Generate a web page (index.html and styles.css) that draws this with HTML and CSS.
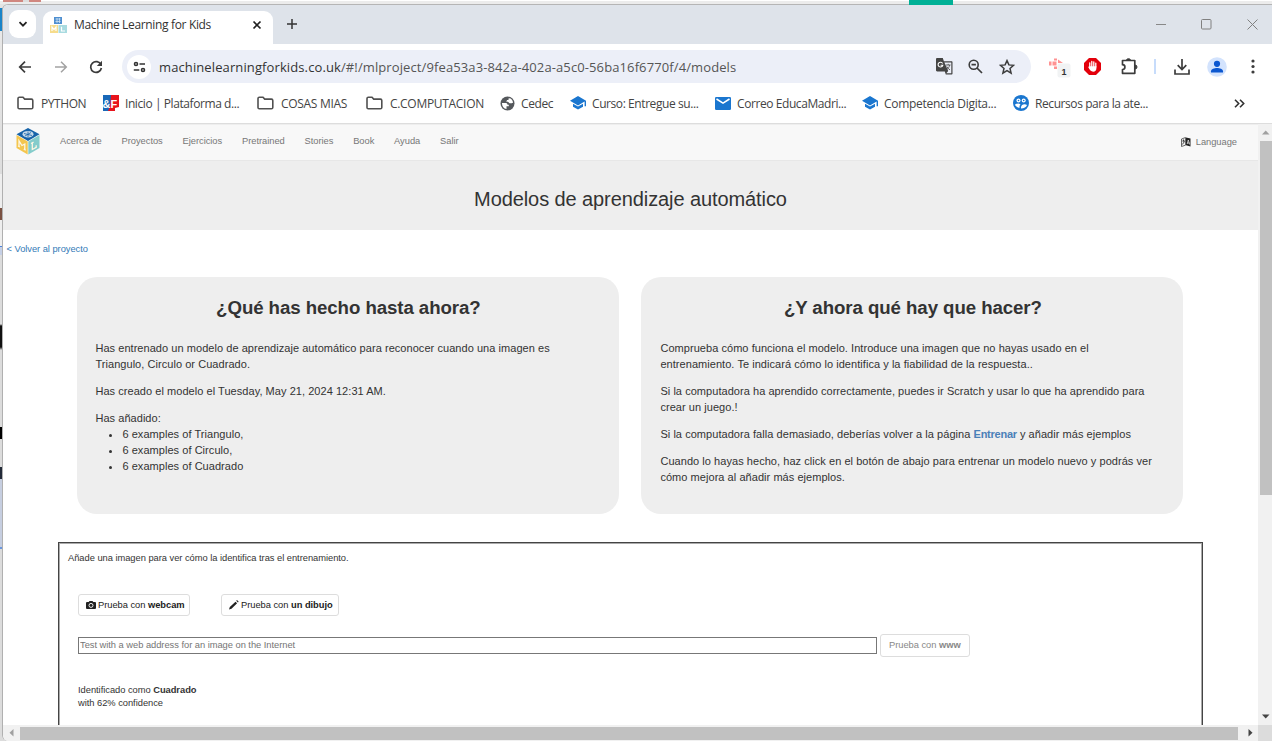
FILE: index.html
```html
<!DOCTYPE html>
<html lang="es">
<head>
<meta charset="utf-8">
<title>Machine Learning for Kids</title>
<link rel="stylesheet" href="styles.css">
</head>
<body>
<div class="desktop-top"><i class="red-bit"></i><i class="teal-bit"></i></div>
<div class="desktop">
<div class="window">
  <header class="tabstrip">
    <button class="tab-search"><svg width="10" height="10" viewBox="0 0 10 10"><path d="M1.500 3.200 5 6.700 8.500 3.200" fill="none" stroke="#222" stroke-width="1.800"/></svg></button>
    <div class="tab">
      <svg class="favicon" width="17" height="16" viewBox="0 0 17 16"><path fill="#4f8fd0" d="M4 0h8v7H4z"/><path d="M5.500 2h5M5.500 4.500h5M7 1v5M9.500 1v5" stroke="#c9dff3" stroke-width=".8"/><path fill="#f6dc8c" d="M0 8h8v8H0z"/><path fill="#a9dbe0" d="M8.500 8H17v8H8.500z"/><path d="M2 14v-4l2 2.500L6 10v4M11.500 9.800V14H15" fill="none" stroke="#fff" stroke-width="1.200"/></svg>
      <span class="tab-title">Machine Learning for Kids</span>
      <svg class="tab-close" width="10" height="10" viewBox="0 0 10 10"><path d="m1.500 1.500 7 7m0-7-7 7" stroke="#222" stroke-width="1.700"/></svg>
    </div>
    <svg class="newtab" width="12" height="12" viewBox="0 0 12 12"><path d="M6 1v10M1 6h10" stroke="#333" stroke-width="1.500"/></svg>
    <div class="wincontrols">
      <svg width="10" height="10" viewBox="0 0 10 10"><path d="M0 5.500h10" stroke="#888"/></svg>
      <svg width="11" height="11" viewBox="0 0 11 11"><rect x=".5" y=".5" width="9.500" height="9.500" rx="1" fill="none" stroke="#808080"/></svg>
      <svg width="11" height="11" viewBox="0 0 11 11"><path d="m.5.5 10 10m0-10-10 10" stroke="#808080"/></svg>
    </div>
  </header>
  <div class="toolbar">
    <div class="navbuttons">
      <svg width="14" height="14" viewBox="0 0 14 14"><path d="M13 7H2m5-5.300L1.700 7 7 12.300" fill="none" stroke="#3c3c3c" stroke-width="1.700"/></svg>
      <svg width="14" height="14" viewBox="0 0 14 14"><path d="M1 7h11M7 1.700 12.300 7 7 12.300" fill="none" stroke="#a3a3a3" stroke-width="1.500"/></svg>
      <svg width="14" height="14" viewBox="0 0 14 14"><path d="M12 4.700A5.400 5.400 0 1 0 12.400 8" fill="none" stroke="#3c3c3c" stroke-width="1.700"/><path d="M13 .8V6H7.800z" fill="#3c3c3c"/></svg>
    </div>
    <div class="omnibox">
      <span class="site-info"><svg width="13" height="12" viewBox="0 0 13 12"><g fill="none" stroke="#333" stroke-width="1.600"><circle cx="3" cy="3" r="1.500"/><path d="M6.500 3H12M.8 9h5.500"/><circle cx="10" cy="9" r="1.500"/></g></svg></span>
      <span class="url"><b>machinelearningforkids.co.uk</b>/#!/mlproject/9fea53a3-842a-402a-a5c0-56ba16f6770f/4/models</span>
      <svg class="ic-translate" width="17" height="17" viewBox="0 0 17 17"><path d="M1.200 0h5.600l1.100 3.200h7.600c.6 0 1 .4 1 1v11.300c0 .6-.4 1-1 1H9.800L8.800 13.500H1.200C.5 13.500 0 13 0 12.300V1.200C0 .5.500 0 1.200 0z" fill="#444"/><path d="M8.400 4.400h6.900v10.900h-5l1.900-2.200z" fill="#eceff8"/><path d="M6.600 5.400A2.400 2.400 0 1 0 6.800 7.300H4.600" fill="none" stroke="#fff" stroke-width="1.100"/><path d="M9.700 7h4.900M12.200 5.800V7m1.400 0c-.3 2-1.300 3.300-2.600 4.400M10.800 8.500c.6 1.400 1.900 2.500 3.200 3.400" fill="none" stroke="#555" stroke-width=".9"/></svg>
      <svg class="ic-zoom" width="15" height="15" viewBox="0 0 15 15"><circle cx="5.700" cy="5.700" r="4.500" fill="none" stroke="#3c3c3c" stroke-width="1.600"/><path d="M3.500 5.700h4.400M9 9l5 5" stroke="#3c3c3c" stroke-width="1.700"/></svg>
      <svg class="ic-star" width="16" height="16" viewBox="0 0 16 16"><path d="m8 1.600 1.900 4.300 4.700.4L11 9.400l1.100 4.700L8 11.600l-4.100 2.500L5 9.400 1.400 6.300l4.700-.4z" fill="none" stroke="#3c3c3c" stroke-width="1.500"/></svg>
    </div>
    <div class="extensions">
      <svg width="24" height="22" viewBox="0 0 24 22"><path d="M0 5.500h2.500v4H0zM3.500 5.500h4v4h-4zM5 2.500h3v2H5zM5 10.500h3v2.500H5zM9 3.500l5 3.500H9z" fill="#ff9292"/><rect x="8.500" y="7.500" width="13" height="14" rx="2" fill="#f1f3f4"/><text x="15" y="18.500" text-anchor="middle" class="badge">1</text></svg>
      <svg width="17" height="17" viewBox="0 0 17 17"><path d="M5 0h7l5 5v7l-5 5H5l-5-5V5z" fill="#e3000b"/><path d="M5.800 9.500V4.800M7.800 8.500V3.500M9.800 8.500V3.800M11.800 9V5.200" stroke="#fff" stroke-width="1.300" stroke-linecap="round"/><path d="M5.200 8.300h7.200v2.200c0 2-1.200 3.200-3.200 3.200-2.200 0-3.500-1.500-5-4.600.3-.8 1-.8 1.500 0z" fill="#fff"/></svg>
      <svg width="17" height="17" viewBox="0 0 17 17"><path d="M1.500 2.500h12.300v12.800H1.500V11.500a2.400 2.400 0 0 0 0-4.800z" fill="none" stroke="#3c3c3c" stroke-width="1.700" stroke-linejoin="round"/><path d="M5.500 2.200a2 1.500 0 0 1 4 0M14 7a2 2 0 0 1 0 4" fill="#3c3c3c" stroke="#3c3c3c"/></svg>
      <span class="divider"></span>
      <svg width="16" height="16" viewBox="0 0 16 16"><path d="M8 0v10M3.700 6.200 8 10.500l4.300-4.300M1 10.500V15h14v-4.500" fill="none" stroke="#3c3c3c" stroke-width="1.700"/></svg>
      <svg width="20" height="20" viewBox="0 0 20 20"><circle cx="10" cy="10" r="9.800" fill="#d3e3fd"/><circle cx="10" cy="6.800" r="3.100" fill="#0b57d0"/><path d="M4 15.500v-1.300C4 12 7.500 11 10 11s6 1 6 3.200v1.300z" fill="#0b57d0"/></svg>
      <svg width="4" height="15" viewBox="0 0 4 15"><g fill="#3c3c3c"><circle cx="2" cy="2" r="1.600"/><circle cx="2" cy="7.500" r="1.600"/><circle cx="2" cy="13" r="1.600"/></g></svg>
    </div>
  </div>
  <nav class="bookmarks">
    <a class="bm"><svg width="17" height="14" viewBox="0 0 17 14"><path class="folder" d="M1 11.500v-9Q1 1.200 2.300 1.200H6l1.700 1.900h6.700q1.400 0 1.400 1.400v7q0 1.300-1.400 1.300H2.300Q1 12.800 1 11.500z"/></svg><span>PYTHON</span></a>
    <a class="bm bm-tight"><svg width="16" height="16" viewBox="0 0 16 16"><path fill="#1868b8" d="M0 0h8v16H0z"/><path fill="#e8141c" d="M8 0h8v12l-4 1v3H5l2-5z"/><text x="-.5" y="12.500" class="amp">&amp;</text><text x="7.500" y="12.500" class="amp">F</text></svg><span>Inicio | Plataforma d...</span></a>
    <a class="bm"><svg width="17" height="14" viewBox="0 0 17 14"><path class="folder" d="M1 11.500v-9Q1 1.200 2.300 1.200H6l1.700 1.900h6.700q1.400 0 1.400 1.400v7q0 1.300-1.400 1.300H2.300Q1 12.800 1 11.500z"/></svg><span class="bm-wide">COSAS MIAS</span></a>
    <a class="bm"><svg width="17" height="14" viewBox="0 0 17 14"><path class="folder" d="M1 11.500v-9Q1 1.200 2.300 1.200H6l1.700 1.900h6.700q1.400 0 1.400 1.400v7q0 1.300-1.400 1.300H2.300Q1 12.800 1 11.500z"/></svg><span class="bm-wide">C.COMPUTACION</span></a>
    <a class="bm bm-tight"><svg width="15" height="15" viewBox="0 0 15 15"><circle cx="7.500" cy="7.500" r="7" fill="#55585c"/><path d="M2 7h3.500c1.200 0 2 .7 2 1.700h1.300v1.600H6.500V13C3.800 12.500 1.800 10 2 7zM7 4h1.500V2.500L10 2.200c1.700.8 2.900 2.500 3 4.500l-1.300.5H9.500L8 5.800H6.300z" fill="#fff"/></svg><span>Cedec</span></a>
    <a class="bm bm-tight"><svg width="16" height="14" viewBox="0 0 16 14"><path d="m8 0 8 4.700v5.600h-1.400V5.500L8 9.400 0 4.700z" fill="#1a76cf"/><path d="M3 7.700 8 10.600l5-2.900v3L8 13.600l-5-2.900z" fill="#1a76cf"/></svg><span>Curso: Entregue su...</span></a>
    <a class="bm bm-tight"><svg width="16" height="13" viewBox="0 0 16 13"><rect width="16" height="13" rx="1.300" fill="#1a76cf"/><path d="m1.500 2 6.500 4.200L14.500 2" fill="none" stroke="#fff" stroke-width="1.500"/></svg><span>Correo EducaMadri...</span></a>
    <a class="bm bm-tight bm-comp"><svg width="16" height="14" viewBox="0 0 16 14"><path d="m8 0 8 4.700v5.600h-1.400V5.500L8 9.400 0 4.700z" fill="#1a76cf"/><path d="M3 7.700 8 10.600l5-2.900v3L8 13.600l-5-2.900z" fill="#1a76cf"/></svg><span>Competencia Digita...</span></a>
    <a class="bm bm-tight"><svg width="16" height="16" viewBox="0 0 16 16"><circle cx="8" cy="8" r="8" fill="#1a76cf"/><g fill="#fff"><circle cx="5.500" cy="5.500" r="2"/><circle cx="10.700" cy="5.500" r="2"/><path d="M1.800 9.800Q5 7.500 7.500 9.400q-1.300 1-1 3.500Q3 12 1.800 9.800zM8 13.500c-.5-5 4.500-5 6-3.500-.7 2-3 3.500-6 3.500z"/></g><circle cx="5.500" cy="5.500" r=".8" fill="#1a76cf"/><circle cx="10.700" cy="5.500" r=".8" fill="#1a76cf"/></svg><span>Recursos para la ate...</span></a>
    <svg class="more" width="11" height="9" viewBox="0 0 11 9"><path d="m1 .8 3.700 3.700L1 8.200M6 .8l3.700 3.700L6 8.200" fill="none" stroke="#333" stroke-width="1.600"/></svg>
  </nav>

  <div class="viewport">
    <div class="page">
      <nav class="navbar">
        <svg class="brand" width="24" height="27" viewBox="0 0 24 27"><path d="M12 0 23.500 6.300 12 13 .5 6.300z" fill="#1763a9"/><path d="M.5 7 11.700 13.500V26.500L.5 20z" fill="#f4c64e"/><path d="M23.500 7 12.300 13.500V26.500L23.500 20z" fill="#84cccb"/><ellipse cx="12" cy="6.200" rx="5.500" ry="3.300" fill="#c5d9ea"/><path d="m8 5.500 8 2M12 3.500v5.500M9 8l6-3.500" stroke="#1763a9" stroke-width=".8"/><path d="M3 18.500v-5.700L5.900 17.500l2.900-1.400v5.700M2 18l2 1M7.800 21.200l2 1M15 15.500l2.600-1.400M16.300 15v6.500l3.900-2.200v-2" fill="none" stroke="#fdf6e3" stroke-width="1.300"/></svg>
        <ul class="menu"><li>Acerca de</li><li>Proyectos</li><li>Ejercicios</li><li>Pretrained</li><li>Stories</li><li>Book</li><li>Ayuda</li><li>Salir</li></ul>
        <div class="language"><svg width="10" height="10" viewBox="0 0 10 10"><path d="M.5 2 4.500.5v7.700L.5 9.500z" fill="#eee" stroke="#444" stroke-width=".8"/><path d="M5 .5l4.500 1v8L5 8.200z" fill="#222"/><path d="M1.300 4h2.500M2.500 2.500v2M1.300 7.500l2.200-3M6.200 7 7.300 3l1.300 4.500M6.500 6h2" fill="none" stroke="#222" stroke-width=".8"/><path d="M6.200 7 7.300 3l1.300 4.500M6.500 6h2" fill="none" stroke="#ddd" stroke-width=".8"/></svg><span>Language</span></div>
      </nav>
      <div class="jumbotron"><h1>Modelos de aprendizaje automático</h1></div>
      <a class="back">&lt; Volver al proyecto</a>
      <div class="cards">
        <section class="card card-left">
          <h2>¿Qué has hecho hasta ahora?</h2>
          <p>Has entrenado un modelo de aprendizaje automático para reconocer cuando una imagen es<br>Triangulo, Circulo or Cuadrado.</p>
          <p>Has creado el modelo el Tuesday, May 21, 2024 12:31 AM.</p>
          <div class="added">Has añadido:
            <ul><li>6 examples of Triangulo,</li><li>6 examples of Circulo,</li><li>6 examples of Cuadrado</li></ul>
          </div>
        </section>
        <section class="card card-right">
          <h2>¿Y ahora qué hay que hacer?</h2>
          <p>Comprueba cómo funciona el modelo. Introduce una imagen que no hayas usado en el<br>entrenamiento. Te indicará cómo lo identifica y la fiabilidad de la respuesta..</p>
          <p>Si la computadora ha aprendido correctamente, puedes ir Scratch y usar lo que ha aprendido para<br>crear un juego.!</p>
          <p>Si la computadora falla demasiado, deberías volver a la página <a>Entrenar</a> y añadir más ejemplos</p>
          <p>Cuando lo hayas hecho, haz click en el botón de abajo para entrenar un modelo nuevo y podrás ver<br>cómo mejora al añadir más ejemplos.</p>
        </section>
      </div>
      <section class="tester">
        <p class="intro">Añade una imagen para ver cómo la identifica tras el entrenamiento.</p>
        <div class="buttons">
          <button class="btn btn-cam"><svg width="10" height="8" viewBox="0 0 10 8"><path d="M0 2q0-1 1-1h1.700L3.500 0h3l.8 1H9q1 0 1 1v5q0 1-1 1H1Q0 8 0 7z" fill="#222"/><circle cx="5" cy="4.400" r="2" fill="none" stroke="#fff" stroke-width=".9"/></svg><span>Prueba con <b>webcam</b></span></button>
          <button class="btn btn-draw"><svg width="10" height="10" viewBox="0 0 10 10"><path d="m0 9.500.8-2.500L6.500 1.700l1.600 1.600L2.500 8.700zM7.200.8l.8-.8 1.700 1.700-.8.800z" fill="#222"/></svg><span>Prueba con <b>un dibujo</b></span></button>
        </div>
        <div class="www"><input class="addr" placeholder="Test with a web address for an image on the Internet"><button class="btn btn-www"><span>Prueba con <b>www</b></span></button></div>
        <p class="result">Identificado como <b>Cuadrado</b><br>with 62% confidence</p>
      </section>
    </div>
    <div class="vscroll"><svg width="8" height="5" viewBox="0 0 8 5"><path d="M0 4.500h7.500L3.700.5z" fill="#a0a0a0"/></svg><div class="vthumb"></div><svg width="8" height="5" viewBox="0 0 8 5"><path d="M0 .5h7.500L3.700 4.500z" fill="#444"/></svg></div>
  </div>
  <div class="hscroll"><svg width="5" height="8" viewBox="0 0 5 8"><path d="M4.500 0v7.500L.5 3.700z" fill="#a0a0a0"/></svg><div class="hthumb"></div><svg width="5" height="8" viewBox="0 0 5 8"><path d="M.5 0v7.500l4-3.800z" fill="#444"/></svg><div class="corner"></div></div>
</div>
</div>
</body>
</html>
```
FILE: styles.css
```css
* { box-sizing: border-box; }
body { margin: 0; width: 1272px; height: 741px; overflow: hidden; font-family: "Liberation Sans", Arial, sans-serif; color: #333; background: #ececec; display: flex; flex-direction: column; }
svg { display: block; flex: none; }
button { font: inherit; letter-spacing: inherit; }

.desktop-top { height: 4px; flex: none; display: flex; background: linear-gradient(#fff 1px, #ececec 1px); }
.red-bit { width: 38px; height: 2px; margin: 0 0 0 3px; background: linear-gradient(90deg, #d08780 20px, #ddd 20px, #ddd 26px, #d08780 26px); }
.teal-bit { width: 44px; height: 5px; margin-left: 868px; background: #00b096; z-index: 2; }
.desktop { flex: 1; min-height: 0; padding-left: 2px; background: linear-gradient(#e4e4e4 4px, #1a84c8 4px, #1a84c8 27px, #e8e8e8 27px, #ddd 170px, #eee 170px, #eee 204px, #7a5142 204px, #7a5142 216px, #eee 216px, #eee 242px, #4d82dc 242px, #4d82dc 243px, #c5cfe5 243px, #c5cfe5 251px, #dcdcdc 251px, #dcdcdc 320px, #111 322px, #111 343px, #dcdcdc 346px, #dcdcdc 423px, #000 423px, #000 435px, #dcdcdc 435px, #dcdcdc 463px, #222a38 463px, #222a38 475px, #c6cee0 475px, #c6cee0 543px, #6a96dd 543px, #6a96dd 545px, #dcdcdc 545px); }
.window { height: 737px; border-left: 1px solid #b0b0b0; border-top: 1px solid #b5b5b5; border-radius: 6px 0 0 6px; overflow: hidden; background: #fff; display: flex; flex-direction: column; }

.tabstrip { height: 39px; flex: none; display: flex; align-items: center; background: #dee3ea; padding: 0 0 1px 6px; }
.tab-search { width: 27px; height: 28px; border: 0; border-radius: 9px; background: #fff; padding: 0 0 1px; display: grid; place-items: center; }
.tab { align-self: flex-end; width: 230px; height: 33px; margin: 0 0 -1px 7px; background: #fff; border-radius: 9px 9px 0 0; display: flex; align-items: center; padding: 0 11px 6px 7px; }
.tab-title { margin-left: 7px; flex: 1; font: 12px "Open Sans", sans-serif; letter-spacing: -.34px; color: #333; white-space: nowrap; }
.newtab { margin-left: 13px; }
.wincontrols { margin-left: auto; display: flex; align-items: center; gap: 35px; padding-right: 14px; }

.toolbar { height: 40px; flex: none; display: flex; align-items: center; padding-top: 5px; }
.navbuttons { display: flex; gap: 21.5px; padding-left: 15px; width: 119px; }
.omnibox { width: 909px; height: 33px; border-radius: 17px; background: #eceff8; display: flex; align-items: center; padding-left: 5px; }
.site-info { width: 24px; height: 24px; border-radius: 50%; background: #fff; display: grid; place-items: center; }
.url { flex: 1; margin-left: 8px; font: 13px "Open Sans", sans-serif; letter-spacing: .11px; color: #555; white-space: nowrap; }
.url b { font-weight: 400; color: #333; }
.ic-zoom { margin-left: 15px; }
.ic-star { margin: 0 16px; }
.extensions { flex: 1; display: flex; align-items: center; padding-left: 18px; }
.extensions > :nth-child(2) { margin-left: 11px; }
.extensions > :nth-child(3) { margin-left: 20px; }
.extensions > :nth-child(5) { margin-left: 18px; }
.extensions > :nth-child(6) { margin-left: 17px; }
.extensions > :nth-child(7) { margin-left: 24px; }
.divider { width: 2px; height: 15px; margin-left: 16px; background: #c7dcfb; }
.badge { font: bold 9px "Liberation Sans", sans-serif; fill: #333; }

.bookmarks { height: 40px; flex: none; display: grid; grid-template-columns: 86px 154px 109px 134px 70px 145px 147px 151px 221px 11px; align-items: center; padding: 0 0 1px 14px; border-bottom: 1px solid #ddd; }
.bm { display: flex; align-items: center; gap: 7px; font: 12px "Open Sans", sans-serif; letter-spacing: -.42px; color: #444; white-space: nowrap; }
.bm .bm-wide { letter-spacing: -.3px; }
.bm-tight { gap: 6px; }
.bm-comp { letter-spacing: -.3px; }
.folder { fill: none; stroke: #505050; stroke-width: 1.6; }
.amp { font: bold 11px "Liberation Sans", sans-serif; letter-spacing: 0; fill: #fff; }

.viewport { height: 601px; flex: none; display: flex; overflow: hidden; }
.page { width: 1255px; flex: none; background: #fff; }
.navbar { height: 37px; display: flex; align-items: center; padding: 0 21px 0 13px; background: #f8f8f8; border-bottom: 1px solid #e7e7e7; border-top: 1px solid #eee; font-size: 9.33px; letter-spacing: -.03px; color: #777; }
.brand { margin-right: 20px; margin-bottom: 2px; }
.menu { display: flex; gap: 19.8px; list-style: none; margin: 0 0 4px; padding: 0; }
.language { margin: 0 0 2px auto; display: flex; align-items: center; gap: 5px; }
.jumbotron { height: 69px; background: #eee; display: flex; justify-content: center; padding-top: 27px; }
h1 { margin: 0; font-size: 20px; line-height: 22px; font-weight: 400; letter-spacing: -.09px; }
.back { display: block; margin: 13px 0 0 3.5px; font-size: 9.33px; letter-spacing: -.04px; line-height: 13px; color: #337ab7; }

.cards { display: flex; gap: 22px; margin: 21px 0 0 74.4px; }
.card { width: 542px; height: 237px; border-radius: 20px; background: #eee; padding: 20px 18px 0; font-size: 11px; letter-spacing: .05px; line-height: 16px; white-space: nowrap; }
h2 { margin: 0 0 21px; text-align: center; font-size: 18.67px; letter-spacing: -.07px; line-height: 22px; font-weight: 700; }
.card p { margin: 0 0 11px; }
.card ul { margin: 0; padding-left: 27px; }
.card a { color: #4a80b8; font-weight: 700; letter-spacing: -.25px; }
.card-right { padding-left: 19px; }

.tester { width: 1145px; height: 220px; margin: 28px 0 0 55px; border: 1px solid #444; box-shadow: inset 0 0 0 1px #aaa; padding: 9px 9px; font-size: 9.33px; line-height: 13px; letter-spacing: -.03px; }
.tester p { margin: 0; }
.buttons { display: flex; gap: 31px; margin: 29px 0 0 10px; }
.btn { height: 22px; border: 1px solid #ddd; border-radius: 3px; background: #fff; color: #222; padding: 0 5px 0 7px; display: flex; align-items: center; gap: 2px; white-space: nowrap; }
.btn-cam { width: 112px; }
.btn-draw { width: 118px; }
.btn-www { width: 90px; height: 23px; color: #888; padding: 0 8px 1px; }
.www { display: flex; align-items: center; gap: 3px; margin: 18px 0 0 10px; }
.addr { width: 799px; height: 17px; border: 1.500px solid #777; padding: 0 1px 2px; font: 9.33px "Liberation Sans", sans-serif; letter-spacing: -.03px; outline: 0; }
.addr::placeholder { color: #757575; }
.tester .result { margin: 27px 0 0 10px; }

.vscroll { width: 14px; background: #f1f1f1; display: flex; flex-direction: column; align-items: center; padding: 6px 0 6px 1px; }
.vthumb { width: 12px; height: 354px; margin: 6px 0 auto 1px; background: #c1c1c1; }
.hscroll { height: 16px; flex: none; background: #f1f1f1; display: flex; align-items: center; padding-left: 6px; }
.hthumb { width: 1218px; height: 13px; margin: 0 10px 0 6px; background: #c1c1c1; }
.corner { width: 14px; height: 16px; margin-left: auto; background: #dcdcdc; }
```
